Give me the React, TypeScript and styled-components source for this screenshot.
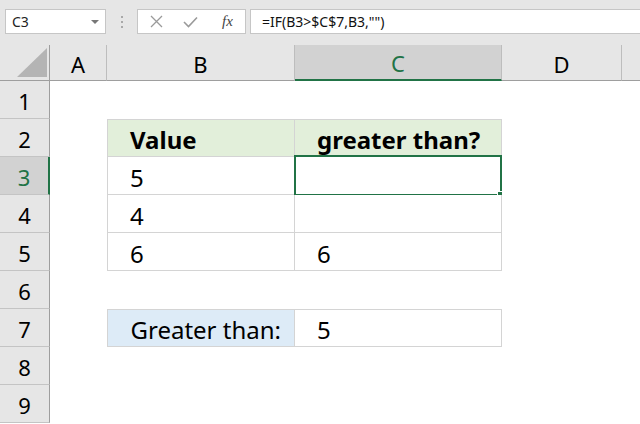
import React from "react"
import styled, { createGlobalStyle } from "styled-components"

const GlobalStyle = createGlobalStyle`
  html, body {
    margin: 0;
    padding: 0;
    background: #fff;
  }
  body {
    font-family: "Noto Sans", "Open Sans", sans-serif;
    color: #000;
  }
`

const Page = styled.div`
  width: 640px;
  height: 424px;
  overflow: hidden;
  display: flex;
  flex-direction: column;
`

const Toolbar = styled.div`
  height: 45px;
  flex: none;
  background: #e6e6e6;
  display: flex;
  align-items: flex-start;
  padding: 9px 0 0 5px;
  box-sizing: border-box;
`

const NameBox = styled.div`
  width: 101px;
  height: 25px;
  box-sizing: border-box;
  background: #fff;
  border: 1px solid #c6c6c6;
  display: flex;
  align-items: center;
  justify-content: space-between;
  padding: 0 6px 0 6px;
  font-size: 14px;
  color: #222;
`

const Caret = styled.span`
  width: 0;
  height: 0;
  border-left: 4px solid transparent;
  border-right: 4px solid transparent;
  border-top: 4px solid #777;
`

const Dots = styled.div`
  width: 31px;
  height: 25px;
  display: flex;
  flex-direction: column;
  align-items: center;
  justify-content: center;
  gap: 3px;
  span {
    width: 2px;
    height: 2px;
    background: #a8a8a8;
  }
`

const FxBox = styled.div`
  width: 109px;
  height: 25px;
  box-sizing: border-box;
  background: #fff;
  border: 1px solid #c6c6c6;
  display: flex;
  align-items: center;
  padding: 0 0 0 12px;
  gap: 20px;
`

const FxLabel = styled.span`
  font-family: "Liberation Serif", serif;
  font-style: italic;
  font-size: 15px;
  color: #444;
  margin-left: 4px;
`

const FormulaInput = styled.div`
  flex: 1;
  height: 25px;
  margin-left: 4px;
  box-sizing: border-box;
  background: #fff;
  border: 1px solid #c6c6c6;
  border-right: none;
  display: flex;
  align-items: center;
  padding-left: 11px;
  font-size: 14px;
  color: #111;
`

const Sheet = styled.div`
  display: grid;
  grid-template-columns: 50px 57px 188px 207px 120px 1fr;
  grid-template-rows: 36px repeat(9, 38px);
  background: #fff;
`

const Corner = styled.div`
  background: #e6e6e6;
  border-right: 1px solid #9e9e9e;
  border-bottom: 1px solid #9e9e9e;
  box-sizing: border-box;
  display: flex;
  align-items: flex-end;
  justify-content: flex-end;
  padding: 0 2px 3px 0;
`

const ColHead = styled.div<{ $selected?: boolean }>`
  background: ${p => (p.$selected ? "#d2d2d2" : "#e6e6e6")};
  color: ${p => (p.$selected ? "#217346" : "#000")};
  border-right: 1px solid #bdbdbd;
  border-bottom: ${p => (p.$selected ? "2px solid #217346" : "1px solid #9e9e9e")};
  box-sizing: border-box;
  display: flex;
  align-items: center;
  justify-content: center;
  font-size: 22px;
  padding-top: 2px;
`

const RowHead = styled.div<{ $selected?: boolean }>`
  background: ${p => (p.$selected ? "#d2d2d2" : "#e6e6e6")};
  color: ${p => (p.$selected ? "#217346" : "#000")};
  border-right: ${p => (p.$selected ? "2px solid #217346" : "1px solid #9e9e9e")};
  border-bottom: 1px solid #c4c4c4;
  box-sizing: border-box;
  display: flex;
  align-items: center;
  justify-content: center;
  font-size: 22px;
  padding-top: 2px;
`

const Cell = styled.div<{
  $boxed?: boolean
  $top?: boolean
  $left?: boolean
  $fill?: string
  $bold?: boolean
  $right?: boolean
}>`
  position: relative;
  box-sizing: border-box;
  background: ${p => p.$fill || "#fff"};
  border-right: ${p => (p.$boxed ? "1px solid #d4d4d4" : "none")};
  border-bottom: ${p => (p.$boxed ? "1px solid #d4d4d4" : "none")};
  border-top: ${p => (p.$top ? "1px solid #d4d4d4" : "none")};
  border-left: ${p => (p.$left ? "1px solid #d4d4d4" : "none")};
  display: flex;
  align-items: center;
  justify-content: ${p => (p.$right ? "flex-end" : "flex-start")};
  padding: 3px ${p => (p.$right ? "13px" : "0")} 0 ${p => (p.$right ? "0" : "22px")};
  font-size: 24px;
  font-weight: ${p => (p.$bold ? 700 : 400)};
  white-space: nowrap;
`

const Selection = styled.div`
  position: absolute;
  left: -1px;
  top: -2px;
  right: -1px;
  bottom: -2px;
  border: 2px solid #217346;
  pointer-events: none;
`

const FillHandle = styled.div`
  position: absolute;
  right: -4px;
  bottom: -4px;
  width: 6px;
  height: 6px;
  background: #217346;
  border: 1px solid #fff;
  border-right: none;
  border-bottom: none;
`

const CloseIcon = () => (
  <svg width="13" height="13" viewBox="0 0 13 13">
    <path d="M1 1 L12 12 M12 1 L1 12" stroke="#9a9a9a" strokeWidth="1.3" fill="none" />
  </svg>
)

const CheckIcon = () => (
  <svg width="15" height="12" viewBox="0 0 15 12">
    <path d="M1 6 L5.5 10.5 L14 1.5" stroke="#9a9a9a" strokeWidth="1.6" fill="none" />
  </svg>
)

const cols = ["A", "B", "C", "D", ""]

type RowData = {
  b?: string
  c?: string
  kind?: "head" | "data" | "label"
}

const rows: RowData[] = [
  {},
  { b: "Value", c: "greater than?", kind: "head" },
  { b: "5", c: "", kind: "data" },
  { b: "4", c: "", kind: "data" },
  { b: "6", c: "6", kind: "data" },
  {},
  { b: "Greater than:", c: "5", kind: "label" },
  {},
  {},
]

export default function App() {
  return (
    <Page>
      <GlobalStyle />
      <Toolbar>
        <NameBox>
          C3
          <Caret />
        </NameBox>
        <Dots>
          <span />
          <span />
          <span />
        </Dots>
        <FxBox>
          <CloseIcon />
          <CheckIcon />
          <FxLabel>fx</FxLabel>
        </FxBox>
        <FormulaInput>=IF(B3&gt;$C$7,B3,"")</FormulaInput>
      </Toolbar>
      <Sheet>
        <Corner>
          <svg width="30" height="29" viewBox="0 0 30 29">
            <polygon points="0,29 30,29 30,0" fill="#b4b4b4" />
          </svg>
        </Corner>
        {cols.map((c, i) => (
          <ColHead key={"h" + i} $selected={c === "C"}>
            {c}
          </ColHead>
        ))}
        {rows.map((r, i) => {
          const n = i + 1
          const boxed = !!r.kind
          const fill =
            r.kind === "head" ? "#e2efda" : r.kind === "label" ? "#ddebf7" : undefined
          const top = r.kind === "head" || r.kind === "label"
          return (
            <React.Fragment key={n}>
              <RowHead $selected={n === 3}>{n}</RowHead>
              <Cell />
              <Cell
                $boxed={boxed}
                $top={top}
                $left={boxed}
                $fill={fill}
                $bold={r.kind === "head"}
                $right={r.kind === "label"}
              >
                {r.b}
              </Cell>
              <Cell
                $boxed={boxed}
                $top={top}
                $fill={r.kind === "head" ? "#e2efda" : undefined}
                $bold={r.kind === "head"}
              >
                {r.c}
                {n === 3 && (
                  <Selection>
                    <FillHandle />
                  </Selection>
                )}
              </Cell>
              <Cell />
              <Cell />
            </React.Fragment>
          )
        })}
      </Sheet>
    </Page>
  )
}
